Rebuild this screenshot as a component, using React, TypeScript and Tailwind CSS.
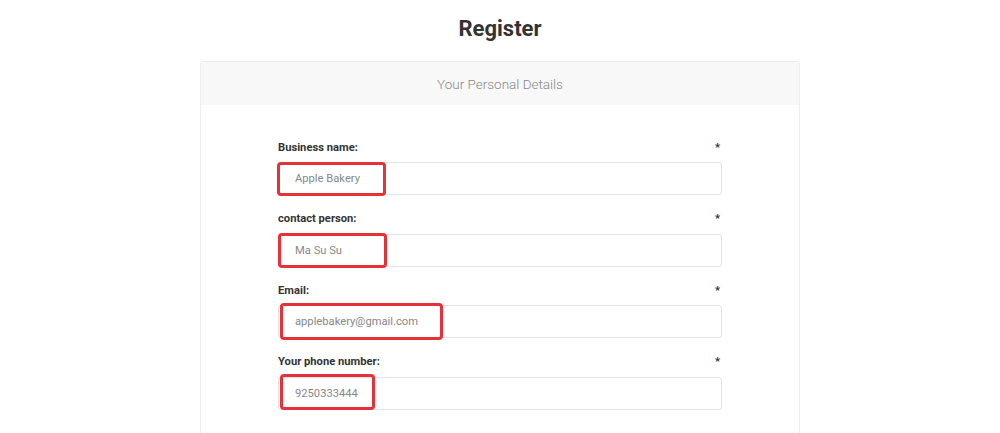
import React from 'react';

interface Field {
  label: string;
  value: string;
  mark: { left: number; top: number; width: number; height: number };
}

const fields: Field[] = [
  { label: 'Business name:', value: 'Apple Bakery', mark: { left: -1, top: 0, width: 109, height: 34 } },
  { label: 'contact person:', value: 'Ma Su Su', mark: { left: 0, top: -1, width: 109, height: 35 } },
  { label: 'Email:', value: 'applebakery@gmail.com', mark: { left: 2, top: -2, width: 163, height: 37 } },
  { label: 'Your phone number:', value: '9250333444', mark: { left: 2, top: -3, width: 95, height: 36 } },
];

const App: React.FC = () => {
  return (
    <div className="bg-white font-['Roboto','Liberation_Sans',sans-serif] text-[#333]">
      <h1 className="pt-[13px] text-center text-[22px] leading-[32px] font-bold text-[#333]">Register</h1>

      <div className="mx-auto mt-[16px] w-[600px] rounded-t-[3px] border border-b-0 border-[#eeeeee]">
        {/* header */}
        <div className="flex h-[43px] items-center justify-center bg-[#f8f8f8] pt-[1px] text-[13.5px] font-light text-[#888]">
          Your Personal Details
        </div>

        {/* form */}
        <div className="px-[77px] pt-[33px] pb-[9px]">
          {fields.map((f) => (
            <div key={f.label} className="mb-[14.5px] last:mb-[14px]">
              <div className="mb-[6px] flex h-[18px] items-center justify-between pt-[1px] text-[11.2px] font-bold leading-[18px] text-[#333]">
                <span>{f.label}</span>
                <span className="pr-[2px]">*</span>
              </div>
              <div className="relative">
                <input
                  readOnly
                  value={f.value}
                  className="h-[33px] w-full rounded-[3px] border border-[#e3e3e3] bg-white pl-[16px] text-[11.2px] text-[#888] outline-none"
                />
                <div
                  className="pointer-events-none absolute rounded-[4px] border-[3px] border-[#e53238]"
                  style={{ left: f.mark.left, top: f.mark.top, width: f.mark.width, height: f.mark.height }}
                />
              </div>
            </div>
          ))}
        </div>
      </div>
    </div>
  );
};

export default App;
